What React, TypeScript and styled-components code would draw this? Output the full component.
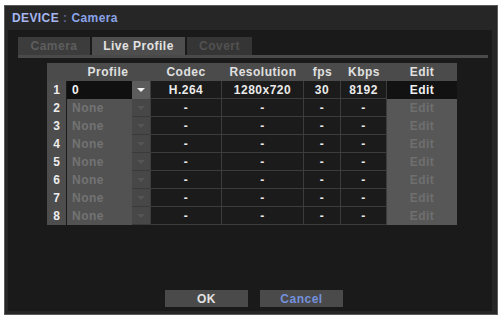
import React from 'react';
import styled, { createGlobalStyle } from 'styled-components';

const GlobalStyle = createGlobalStyle`
  body {
    margin: 0;
    background: #ffffff;
    font-family: "Liberation Sans", Arial, sans-serif;
  }
`;

const COLS = '19px 66px 18px 72px 82px 37px 46px 70px';

const Frame = styled.div`
  margin: 5px 0 0 4px;
  width: 494px;
  height: 310px;
  box-sizing: border-box;
  border: 1px solid #5a5a5a;
  background: #262626;
  display: flex;
  flex-direction: column;
`;

const TitleBar = styled.div`
  height: 24px;
  display: flex;
  align-items: center;
  padding-left: 7px;
  font-size: 12px;
  font-weight: 700;
  letter-spacing: 0.4px;
`;

const TitleMain = styled.span`
  color: #a6b6f0;
`;

const TitleSep = styled.span`
  color: #5f6894;
  margin: 0 4px;
`;

const TitleSub = styled.span`
  color: #8aa3e8;
`;

const Body = styled.div`
  flex: 1;
  margin: 0 5px 3px 3px;
  background: #1a1a1a;
  display: flex;
  flex-direction: column;
  padding: 7px 0 4px 0;
`;

const Tabs = styled.div`
  display: flex;
  gap: 2px;
  padding-left: 10px;
`;

const Tab = styled.div<{ state: 'off' | 'on' | 'dim'; w: number }>`
  width: ${p => p.w}px;
  height: 18px;
  display: flex;
  align-items: center;
  justify-content: center;
  font-size: 12px;
  font-weight: 700;
  letter-spacing: 0.5px;
  background: ${p => (p.state === 'on' ? '#4e4e4e' : p.state === 'off' ? '#3c3c3c' : '#353535')};
  color: ${p => (p.state === 'on' ? '#e2e2e2' : p.state === 'off' ? '#5e5e5e' : '#515151')};
`;

const TabLine = styled.div`
  height: 3px;
  margin: 0 4px 0 10px;
  background: #4a4a4a;
`;

const Table = styled.div`
  margin: 5px 0 0 39px;
  width: 410px;
  display: flex;
  flex-direction: column;
`;

const Row = styled.div`
  display: grid;
  grid-template-columns: ${COLS};
  height: 18px;
`;

const HeadRow = styled(Row)`
  background: #4b4b4b;
`;

const HeadCell = styled.div<{ span?: number }>`
  grid-column: span ${p => p.span ?? 1};
  display: flex;
  align-items: center;
  justify-content: center;
  color: #e0e0e0;
  font-size: 12px;
  font-weight: 700;
  letter-spacing: 0.5px;
`;

const NumCell = styled.div`
  background: #4d4d4d;
  color: #ececec;
  font-size: 12px;
  font-weight: 700;
  display: flex;
  align-items: center;
  justify-content: center;
`;

const SelectCell = styled.div<{ active: boolean }>`
  background: ${p => (p.active ? '#101010' : '#525252')};
  color: ${p => (p.active ? '#f0f0f0' : '#727272')};
  font-size: 12px;
  font-weight: 700;
  letter-spacing: 0.5px;
  display: flex;
  align-items: center;
  padding-left: 5px;
  margin-left: 1px;
`;

const DropButton = styled.div<{ active: boolean }>`
  background: ${p => (p.active ? '#5c5c5c' : '#474747')};
  border-bottom: 1px solid ${p => (p.active ? '#5c5c5c' : '#3a3a3a')};
  box-sizing: border-box;
  display: flex;
  align-items: center;
  justify-content: center;
`;

const Arrow = styled.span<{ active: boolean }>`
  width: 0;
  height: 0;
  border-left: 4px solid transparent;
  border-right: 4px solid transparent;
  border-top: 4px solid ${p => (p.active ? '#f2f2f2' : '#555555')};
`;

const DataCell = styled.div<{ first?: boolean }>`
  background: #1b1b1b;
  border-bottom: 1px solid #3c3c3c;
  border-right: 1px solid #3c3c3c;
  border-left: ${p => (p.first ? '1px solid #3c3c3c' : 'none')};
  box-sizing: border-box;
  color: #eaeaea;
  font-size: 12px;
  font-weight: 700;
  letter-spacing: 0.5px;
  display: flex;
  align-items: center;
  justify-content: center;
`;

const EditCell = styled.div<{ active: boolean }>`
  background: ${p => (p.active ? '#121212' : '#575757')};
  color: ${p => (p.active ? '#f0f0f0' : '#6f6f6f')};
  font-size: 12px;
  font-weight: 700;
  letter-spacing: 0.5px;
  display: flex;
  align-items: center;
  justify-content: center;
`;

const Footer = styled.div`
  margin-top: auto;
  display: flex;
  justify-content: center;
  gap: 12px;
  padding-left: 8px;
`;

const Button = styled.div<{ tone: 'plain' | 'blue' }>`
  width: 83px;
  height: 17px;
  background: #4a4a4a;
  color: ${p => (p.tone === 'blue' ? '#7391dd' : '#e2e2e2')};
  font-size: 12px;
  font-weight: 700;
  letter-spacing: 0.5px;
  display: flex;
  align-items: center;
  justify-content: center;
`;

const profiles = [
  { name: '0', codec: 'H.264', res: '1280x720', fps: '30', kbps: '8192' },
  ...Array.from({ length: 7 }, () => ({ name: 'None', codec: '-', res: '-', fps: '-', kbps: '-' })),
];

export default function App() {
  return (
    <>
      <GlobalStyle />
      <Frame>
        <TitleBar>
          <TitleMain>DEVICE</TitleMain>
          <TitleSep>:</TitleSep>
          <TitleSub>Camera</TitleSub>
        </TitleBar>
        <Body>
          <Tabs>
            <Tab state="off" w={72}>Camera</Tab>
            <Tab state="on" w={93}>Live Profile</Tab>
            <Tab state="dim" w={65}>Covert</Tab>
          </Tabs>
          <TabLine />
          <Table>
            <HeadRow>
              <HeadCell />
              <HeadCell span={2}>Profile</HeadCell>
              <HeadCell>Codec</HeadCell>
              <HeadCell>Resolution</HeadCell>
              <HeadCell>fps</HeadCell>
              <HeadCell>Kbps</HeadCell>
              <HeadCell>Edit</HeadCell>
            </HeadRow>
            {profiles.map((p, i) => {
              const active = i === 0;
              return (
                <Row key={i}>
                  <NumCell>{i + 1}</NumCell>
                  <SelectCell active={active}>{p.name}</SelectCell>
                  <DropButton active={active}>
                    <Arrow active={active} />
                  </DropButton>
                  <DataCell first>{p.codec}</DataCell>
                  <DataCell>{p.res}</DataCell>
                  <DataCell>{p.fps}</DataCell>
                  <DataCell>{p.kbps}</DataCell>
                  <EditCell active={active}>Edit</EditCell>
                </Row>
              );
            })}
          </Table>
          <Footer>
            <Button tone="plain">OK</Button>
            <Button tone="blue">Cancel</Button>
          </Footer>
        </Body>
      </Frame>
    </>
  );
}
